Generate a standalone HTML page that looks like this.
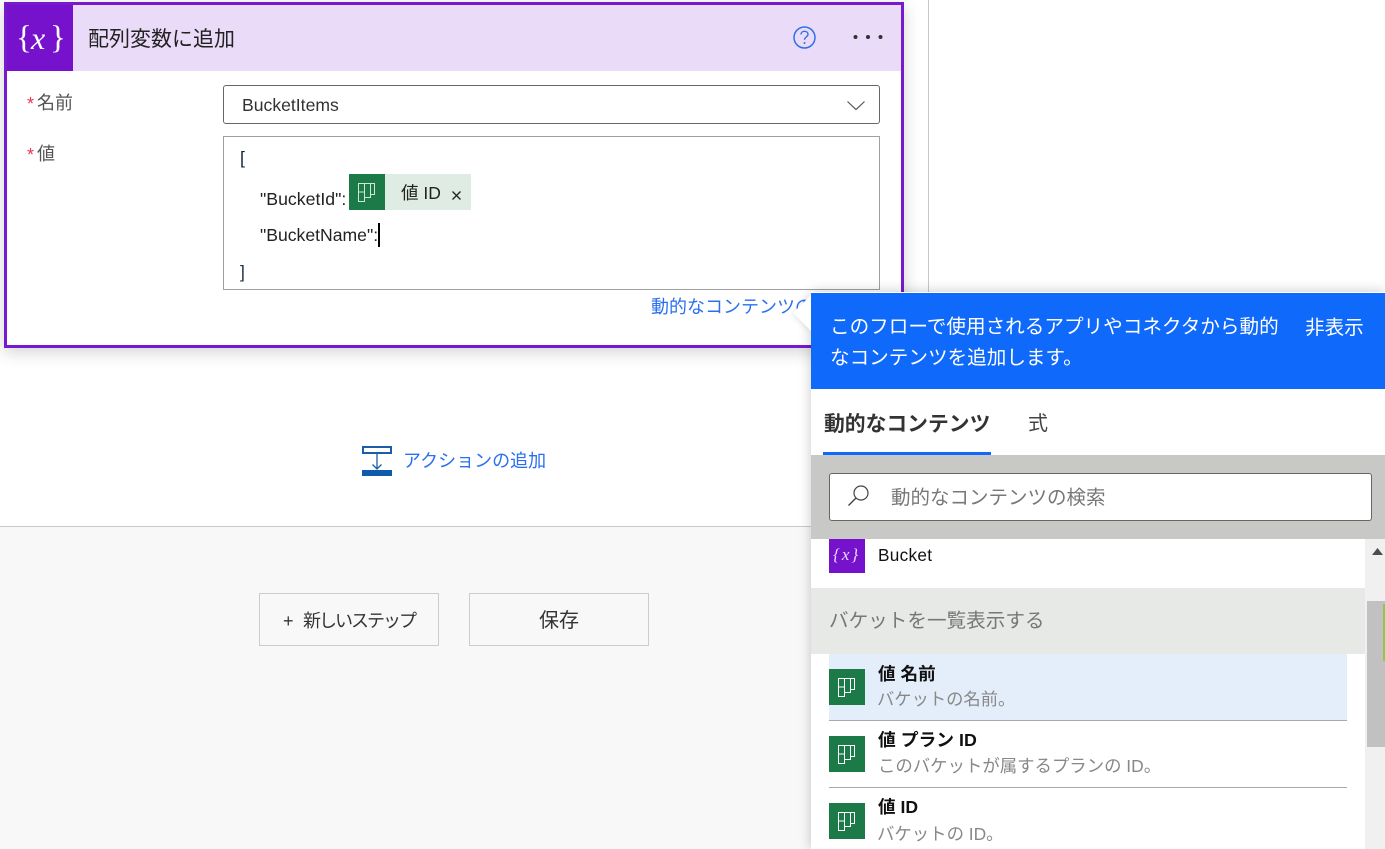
<!DOCTYPE html>
<html lang="ja"><head><meta charset="utf-8">
<style>
html,body{margin:0;padding:0;width:1385px;height:849px;overflow:hidden;background:#fff}
body{position:relative;font-family:"Liberation Sans","Noto Sans CJK JP",sans-serif;font-size:18px;color:#333}
.a{position:absolute;box-sizing:border-box}
.t{position:absolute;white-space:nowrap;line-height:24px}
svg{position:absolute;overflow:visible}
.ic{position:absolute;width:36px;height:36px;background:#1b7a48}
.ic svg{left:9px;top:9px}
</style></head><body>
<div class="a" style="left:928px;top:0;width:1px;height:293px;background:#c8c8c8"></div>
<div class="a" style="left:0;top:526px;width:811px;height:323px;background:#f8f8f8;border-top:1px solid #c8c8c8"></div>

<!-- card -->
<div class="a" style="left:4px;top:2px;width:900px;height:346px;border:3px solid #7719cc;background:#fff;box-shadow:0 4px 16px rgba(0,0,0,.18)"></div>
<div class="a" style="left:7px;top:5px;width:894px;height:66px;background:#eadbf8"></div>
<div class="a" style="left:7px;top:5px;width:66px;height:66px;background:#7612cc"></div>
<div class="t" style="left:16px;top:16px;color:#fff;font:33px/44px 'Liberation Serif',serif">{</div>
<div class="t" style="left:31px;top:16px;color:#fff;font:italic 32px/44px 'Liberation Serif',serif">x</div>
<div class="t" style="left:50px;top:16px;color:#fff;font:33px/44px 'Liberation Serif',serif">}</div>
<div class="t" style="left:88px;top:28px;font-size:21px;color:#222">配列変数に追加</div>
<svg style="left:793px;top:26px" width="23" height="23" viewBox="0 0 23 23"><circle cx="11.5" cy="11.5" r="10.5" fill="none" stroke="#2f6fe8" stroke-width="1.5"/><path d="M8 8.5c0-2 1.6-3.2 3.5-3.2s3.5 1.2 3.5 3c0 2.6-3.5 2.6-3.5 5.5" fill="none" stroke="#2f6fe8" stroke-width="1.4"/><circle cx="11.5" cy="17" r="1" fill="#2f6fe8"/></svg>
<svg style="left:852px;top:34px" width="32" height="8"><circle cx="3.500" cy="3" r="2" fill="#333"/><circle cx="16" cy="3" r="2" fill="#333"/><circle cx="28.500" cy="3" r="2" fill="#333"/></svg>

<div class="t" style="left:27px;top:92px;font-size:18px;color:#e8344f">*</div>
<div class="t" style="left:37px;top:91px;font-size:18px;color:#555">名前</div>
<div class="t" style="left:27px;top:143px;font-size:18px;color:#e8344f">*</div>
<div class="t" style="left:37px;top:142px;font-size:18px;color:#555">値</div>

<div class="a" style="left:223px;top:85px;width:657px;height:39px;border:1px solid #666;border-radius:3px;background:#fff"></div>
<div class="t" style="left:242px;top:93px;font-size:17.600px;color:#333">BucketItems</div>
<svg style="left:847px;top:101px" width="18" height="10"><path d="M.5 .5l8.500 8 8.500-8" fill="none" stroke="#555" stroke-width="1.200"/></svg>

<div class="a" style="left:223px;top:136px;width:657px;height:154px;border:1px solid #a0a0a0;background:#fff"></div>
<div class="t" style="left:240px;top:146px;font-size:17.600px;color:#123">[</div>
<div class="t" style="left:260px;top:187px;font-size:17.700px;color:#222">"BucketId":</div>
<div class="a" style="left:349px;top:174px;width:122px;height:36px;background:#dfece4"></div>
<div class="ic" style="left:349px;top:174px"><svg width="17" height="19" viewBox="0 0 17 19" fill="none" stroke="#cfe6d8" stroke-width="1"><path d="M.5 .5h6v18h-6zM.5 9h6M6.500 .5h6v14h-6zM12.500 .5h4v11h-4z"/></svg></div>
<div class="t" style="left:401px;top:181px;font-size:17.500px;color:#222">値 ID</div>
<svg style="left:452px;top:191px" width="9" height="9"><path d="M.5 .5l8 8M8.500 .5l-8 8" stroke="#222" stroke-width="1.300"/></svg>
<div class="t" style="left:260px;top:223px;font-size:17.600px;color:#222">"BucketName":</div>
<div class="a" style="left:378px;top:223px;width:2px;height:24px;background:#000"></div>
<div class="t" style="left:240px;top:260px;font-size:17.600px;color:#234">]</div>
<div class="t" style="left:651px;top:295px;font-size:18px;color:#2a6ff0;width:160px;overflow:hidden">動的なコンテンツの追加</div>

<!-- add action -->
<svg style="left:362px;top:446px" width="30" height="30" viewBox="0 0 30 30"><rect x="1" y="1" width="28" height="6" fill="#fff" stroke="#1a5ea8" stroke-width="2"/><path d="M15 7v16M10.500 18.500l4.500 4.500 4.500-4.500" fill="none" stroke="#1a5ea8" stroke-width="1.300"/><rect y="24" width="30" height="6" fill="#0f5bab"/></svg>
<div class="t" style="left:403px;top:449px;font-size:18px;color:#2a6ff0">アクションの追加</div>

<!-- buttons -->
<div class="a" style="left:259px;top:593px;width:180px;height:53px;border:1px solid #ccc;background:#f8f8f8"></div>
<div class="t" style="left:283px;top:609px;font-size:18px;color:#333">+</div>
<div class="t" style="left:303px;top:609px;font-size:18px;color:#333;letter-spacing:-2px">新しいステップ</div>
<div class="a" style="left:469px;top:593px;width:180px;height:53px;border:1px solid #ccc;background:#f8f8f8"></div>
<div class="t" style="left:539px;top:609px;font-size:20px;color:#333">保存</div>

<!-- panel -->
<div class="a" style="left:811px;top:292px;width:574px;height:557px;background:#fff;box-shadow:0 0 12px rgba(0,0,0,.22)"></div>
<svg style="left:793px;top:295px;filter:drop-shadow(-1px 1px 3px rgba(0,0,0,.1))" width="19" height="37"><path d="M18 0L0 18l18 18z" fill="#fff"/></svg>
<div class="a" style="left:811px;top:293px;width:574px;height:96px;background:#0f69fa"></div>
<div class="t" style="left:830px;top:312px;font-size:19.600px;line-height:31px;color:#fff;width:470px;white-space:normal">このフローで使用されるアプリやコネクタから動的<br>なコンテンツを追加します。</div>
<div class="t" style="left:1305px;top:316px;font-size:19.600px;color:#fff">非表示</div>
<div class="t" style="left:824px;top:413px;font-size:20.800px;font-weight:bold;color:#333">動的なコンテンツ</div>
<div class="t" style="left:1028px;top:412px;font-size:20px;color:#444">式</div>
<div class="a" style="left:811px;top:455px;width:574px;height:84px;background:#c8c9c7"></div>
<div class="a" style="left:823px;top:452px;width:168px;height:3px;background:#0f69fa"></div>
<div class="a" style="left:829px;top:473px;width:543px;height:48px;background:#fff;border:1px solid #666;border-radius:3px"></div>
<svg style="left:847px;top:485px" width="23" height="22"><circle cx="14" cy="8" r="7" fill="none" stroke="#444" stroke-width="1.200"/><path d="M9 13L1.500 20.500" stroke="#444" stroke-width="1.400"/></svg>
<div class="t" style="left:891px;top:486px;font-size:19.500px;color:#777">動的なコンテンツの検索</div>

<div class="a" style="left:829px;top:539px;width:36px;height:34px;background:#7612cc"></div>
<div class="t" style="left:833px;top:542px;color:#eadbf8;font:italic 17px/26px 'Liberation Serif',serif">{<span style="margin:0 2px">x</span>}</div>
<div class="t" style="left:878px;top:543px;font-size:17.200px;color:#111;letter-spacing:.3px">Bucket</div>

<div class="a" style="left:811px;top:588px;width:554px;height:66px;background:#e7e9e6"></div>
<div class="t" style="left:829px;top:609px;font-size:19.600px;color:#777">バケットを一覧表示する</div>

<div class="a" style="left:829px;top:654px;width:518px;height:66px;background:#e4eefb"></div>
<div class="a" style="left:829px;top:720px;width:518px;height:1px;background:#aaa"></div>
<div class="a" style="left:829px;top:787px;width:518px;height:1px;background:#aaa"></div>

<div class="ic" style="left:829px;top:669px"><svg width="17" height="19" viewBox="0 0 17 19" fill="none" stroke="#fff" stroke-width="1"><path d="M.5 .5h6v18h-6zM.5 9h6M6.500 .5h6v14h-6zM12.500 .5h4v11h-4z"/></svg></div>
<div class="ic" style="left:829px;top:736px"><svg width="17" height="19" viewBox="0 0 17 19" fill="none" stroke="#fff" stroke-width="1"><path d="M.5 .5h6v18h-6zM.5 9h6M6.500 .5h6v14h-6zM12.500 .5h4v11h-4z"/></svg></div>
<div class="ic" style="left:829px;top:803px"><svg width="17" height="19" viewBox="0 0 17 19" fill="none" stroke="#fff" stroke-width="1"><path d="M.5 .5h6v18h-6zM.5 9h6M6.500 .5h6v14h-6zM12.500 .5h4v11h-4z"/></svg></div>

<div class="t" style="left:878px;top:662px;font-size:17.600px;font-weight:bold;color:#111">値 名前</div>
<div class="t" style="left:877px;top:687px;font-size:17.300px;color:#888">バケットの名前。</div>
<div class="t" style="left:878px;top:728px;font-size:17.800px;font-weight:bold;color:#111">値 プラン ID</div>
<div class="t" style="left:878px;top:754px;font-size:17.400px;color:#888">このバケットが属するプランの ID。</div>
<div class="t" style="left:878px;top:795px;font-size:17.600px;font-weight:bold;color:#111">値 ID</div>
<div class="t" style="left:877px;top:822px;font-size:17.400px;color:#888">バケットの ID。</div>

<!-- scrollbar -->
<div class="a" style="left:1365px;top:539px;width:20px;height:310px;background:#f0f0f0"></div>
<svg style="left:1372px;top:548px" width="11" height="7"><path d="M5.500 0L11 7H0z" fill="#4d4d4d"/></svg>
<div class="a" style="left:1367px;top:601px;width:18px;height:146px;background:#c1c1c1"></div>
<div class="a" style="left:1383px;top:604px;width:2px;height:57px;background:#8cc84b"></div>
</body></html>
